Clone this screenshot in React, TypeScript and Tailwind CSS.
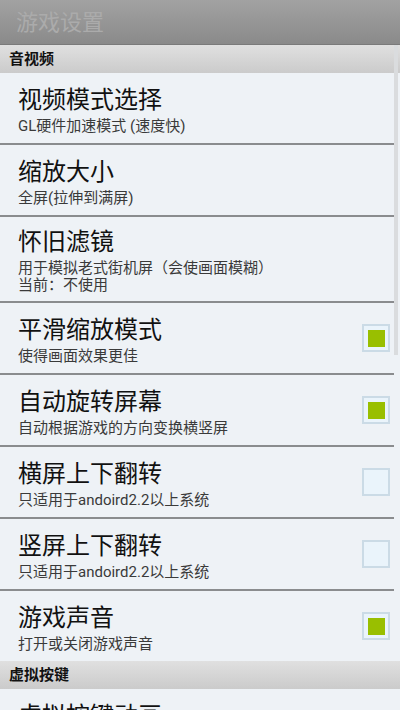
import React from "react";

type Item = {
  title: string;
  sub: string[];
  check?: boolean;
  divider?: boolean;
};

const FONT = { fontFamily: '"Roboto", "Noto Sans CJK SC", sans-serif' };

function CheckBox({ on }: { on: boolean }) {
  return (
    <div className="w-[28px] h-[28px] border-2 border-[#cbdbe6] bg-[#eaf4fb] flex items-center justify-center shrink-0">
      {on ? <div className="w-[17px] h-[17px] bg-[#99bf00]" /> : null}
    </div>
  );
}

function Row({ item }: { item: Item }) {
  return (
    <div>
      <div className="min-h-[70px] py-[7px] pl-[18px] pr-[10px] flex items-center">
        <div className="flex-1 flex flex-col justify-center">
          <div className="text-[24px] leading-[36px] text-[#111111]">{item.title}</div>
          {item.sub.map((s, i) => (
            <div key={i} className="text-[15px] leading-[17px] text-[#3a3a3a]">
              {s}
            </div>
          ))}
        </div>
        {item.check !== undefined ? <CheckBox on={item.check} /> : null}
      </div>
      {item.divider !== false ? <div className="h-[2px] bg-[#8a8c8e] mr-[6px]" /> : null}
    </div>
  );
}

function Header({ text }: { text: string }) {
  return (
    <div className="h-[28px] pl-[9px] flex items-center bg-gradient-to-b from-[#e0e0e0] to-[#cbcbcb] text-[15px] font-bold text-[#111111]">
      {text}
    </div>
  );
}

export default function App() {
  const av: Item[] = [
    { title: "视频模式选择", sub: ["GL硬件加速模式 (速度快)"] },
    { title: "缩放大小", sub: ["全屏(拉伸到满屏)"] },
    { title: "怀旧滤镜", sub: ["用于模拟老式街机屏（会使画面模糊）", "当前：不使用"] },
    { title: "平滑缩放模式", sub: ["使得画面效果更佳"], check: true },
    { title: "自动旋转屏幕", sub: ["自动根据游戏的方向变换横竖屏"], check: true },
    { title: "横屏上下翻转", sub: ["只适用于andoird2.2以上系统"], check: false },
    { title: "竖屏上下翻转", sub: ["只适用于andoird2.2以上系统"], check: false },
    { title: "游戏声音", sub: ["打开或关闭游戏声音"], check: true, divider: false },
  ];
  const vk: Item[] = [{ title: "虚拟按键动画", sub: ["显示按键按下时的效果"] }];

  return (
    <div className="w-[400px] h-[710px] overflow-hidden relative bg-[#eef2f6]" style={FONT}>
      <div className="h-[45px] bg-gradient-to-b from-[#a2a2a2] to-[#8a8a8a] flex items-center pl-[16px] border-b border-[#7a7a7a]">
        <span className="text-[22px] text-[#ababab]">游戏设置</span>
      </div>
      <Header text="音视频" />
      {av.map((it, i) => (
        <Row key={i} item={it} />
      ))}
      <Header text="虚拟按键" />
      {vk.map((it, i) => (
        <Row key={i} item={it} />
      ))}
      <div className="absolute right-[2px] top-[45px] w-[4px] h-[310px] bg-[#dadcde]" />
    </div>
  );
}
